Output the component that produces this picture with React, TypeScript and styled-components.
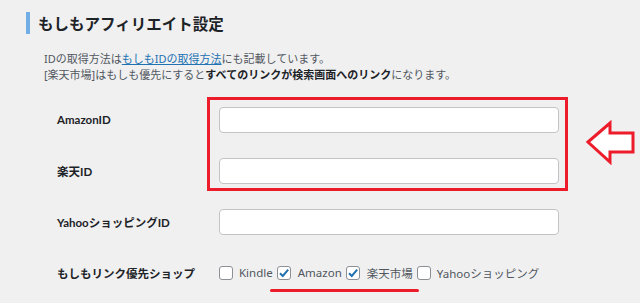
import styled, { createGlobalStyle } from 'styled-components';

const GlobalStyle = createGlobalStyle`
  body {
    margin: 0;
    background: #f0f0f1;
    font-family: "Noto Sans", "Noto Sans CJK JP", sans-serif;
    color: #3c434a;
  }
`;

const Page = styled.div`
  width: 640px;
  height: 303px;
  padding: 12px 0 0 26px;
  box-sizing: border-box;
  overflow: hidden;
`;

const Heading = styled.h2`
  margin: 0;
  height: 22px;
  line-height: 22px;
  border-left: 4px solid #72aee6;
  padding-left: 8px;
  font-size: 15.5px;
  font-weight: 600;
  color: #1d2327;
  font-family: "Noto Sans CJK JP", sans-serif;
`;

const Description = styled.div`
  margin: 17px 0 0 18px;
  font-size: 11px;
  line-height: 16px;
  color: #50575e;
  font-family: "Noto Sans", "Noto Sans CJK JP", sans-serif;

  a {
    color: #2271b1;
    text-decoration: underline;
  }

  b {
    color: #1d2327;
    font-weight: 700;
  }
`;

const Form = styled.div`
  position: relative;
  margin: 11px 0 0 31px;
`;

const Row = styled.div`
  display: grid;
  grid-template-columns: 162px 340px;
  align-items: center;
  height: 51px;
`;

const Label = styled.div`
  font-family: "Lato", "Noto Sans CJK JP", sans-serif;
  font-size: 11.5px;
  font-weight: 700;
  color: #1d2327;
`;

const TextInput = styled.input`
  box-sizing: border-box;
  width: 340px;
  height: 26px;
  margin: 0;
  border: 1px solid #c3c4c7;
  border-radius: 4px;
  background: #fff;
`;

const Checks = styled.div`
  display: flex;
  align-items: center;
  white-space: nowrap;
`;

const CheckItem = styled.label`
  display: flex;
  align-items: center;
  margin-right: 4px;
  font-size: 11.5px;
  color: #50575e;
`;

const Box = styled.span<{ checked?: boolean }>`
  box-sizing: border-box;
  width: 14px;
  height: 14px;
  margin-right: ${(p) => (p.checked ? '7px' : '6px')};
  border: 1px solid #8c8f94;
  border-radius: 3px;
  background: #fff;
  display: flex;
  align-items: center;
  justify-content: center;
`;

const RedBox = styled.div`
  position: absolute;
  left: 150px;
  top: 3px;
  width: 361px;
  height: 94px;
  box-sizing: border-box;
  border: 3px solid #ec1c2a;
  pointer-events: none;
`;

const Arrow = styled.svg`
  position: absolute;
  left: 528px;
  top: 26px;
`;

const Underline = styled.div`
  position: absolute;
  left: 213px;
  top: 195px;
  width: 149px;
  height: 3px;
  border-radius: 2px;
  background: #ec1c2a;
`;

const Tick = () => (
  <svg width="12" height="12" viewBox="0 0 12 12">
    <path d="M2 6.2 L4.8 9 L10.2 2.6" fill="none" stroke="#2271b1" strokeWidth="2" />
  </svg>
);

const shops = [
  { name: 'Kindle', checked: false },
  { name: 'Amazon', checked: true },
  { name: '楽天市場', checked: true },
  { name: 'Yahooショッピング', checked: false },
];

const App: React.FC = () => {
  return (
    <Page>
      <GlobalStyle />
      <Heading>もしもアフィリエイト設定</Heading>
      <Description>
        <div>
          IDの取得方法は<a href="#">もしもIDの取得方法</a>にも記載しています。
        </div>
        <div>
          [楽天市場]はもしも優先にすると<b>すべてのリンクが検索画面へのリンク</b>になります。
        </div>
      </Description>
      <Form>
        <Row>
          <Label>AmazonID</Label>
          <TextInput type="text" />
        </Row>
        <Row>
          <Label>楽天ID</Label>
          <TextInput type="text" />
        </Row>
        <Row>
          <Label>YahooショッピングID</Label>
          <TextInput type="text" />
        </Row>
        <Row>
          <Label>もしもリンク優先ショップ</Label>
          <Checks>
            {shops.map((s) => (
              <CheckItem key={s.name}>
                <Box checked={s.checked}>{s.checked && <Tick />}</Box>
                {s.name}
              </CheckItem>
            ))}
          </Checks>
        </Row>
        <RedBox />
        <Arrow width="51" height="45" viewBox="0 0 51 45">
          <path
            d="M3 22 L25 3 L25 13 L48 13 L48 32 L25 32 L25 42 Z"
            fill="#fff"
            stroke="#ec1c2a"
            strokeWidth="3"
            strokeLinejoin="miter"
          />
        </Arrow>
        <Underline />
      </Form>
    </Page>
  );
};

export default App;
